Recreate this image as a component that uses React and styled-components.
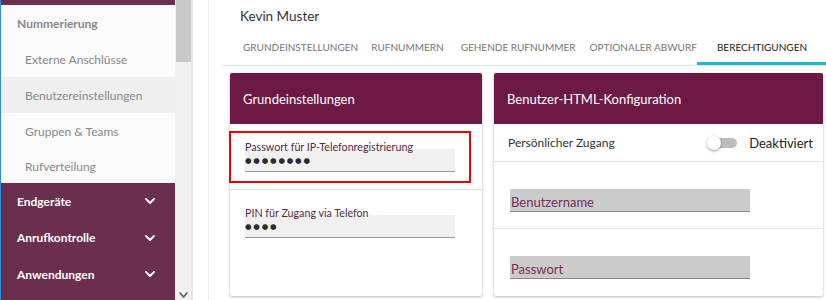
import React from 'react';
import styled, { createGlobalStyle } from 'styled-components';

const GlobalStyle = createGlobalStyle`
  html, body {
    margin: 0;
    padding: 0;
    background: #ffffff;
  }
  body {
    font-family: Lato, "Open Sans", sans-serif;
  }
  #root {
    height: 300px;
    overflow: hidden;
  }
`;

const Page = styled.div`
  display: flex;
  height: 300px;
  overflow: hidden;
  border-left: 1px solid #2a8ee8;
`;

const Sidebar = styled.nav`
  width: 174px;
  flex-shrink: 0;
  background: #fafafa;
  display: flex;
  flex-direction: column;
`;

const GroupEnd = styled.div`
  height: 5px;
  background: #6a2e4e;
`;

const SectionTitle = styled.div`
  height: 36px;
  display: flex;
  align-items: center;
  padding-left: 16px;
  font-size: 12px;
  font-weight: 700;
  color: #8a8a8a;
`;

const SubItem = styled.div`
  height: 36px;
  display: flex;
  align-items: center;
  padding-left: 24px;
  font-size: 12px;
  color: #888888;
  background: ${props => (props.$active ? '#efefef' : 'transparent')};

  &:last-of-type {
    height: 34px;
  }
`;

const SubList = styled.div`
  display: flex;
  flex-direction: column;
`;

const Group = styled.div`
  height: 36.5px;
  flex-shrink: 0;
  display: flex;
  align-items: center;
  justify-content: space-between;
  padding: 0 20px 0 16px;
  background: #6a2e4e;
  color: #ffffff;
  font-size: 12px;
  font-weight: 700;
`;

const GroupFill = styled.div`
  flex: 1;
  background: #6a2e4e;
`;

const Scrollbar = styled.div`
  width: 16px;
  flex-shrink: 0;
  background: #f0f0f0;
  display: flex;
  flex-direction: column;
  justify-content: space-between;
  align-items: flex-end;
`;

const Thumb = styled.div`
  width: 15px;
  height: 62px;
  background: #c8c8c8;
`;

const ScrollArrow = styled.div`
  width: 16px;
  height: 8px;
  display: flex;
  justify-content: center;
  align-items: flex-start;
`;

const Gutter = styled.div`
  width: 15px;
  flex-shrink: 0;
  border-left: 2px solid #e6e6e6;
  border-right: 1px solid #ececec;
  background: #ffffff;
`;

const Main = styled.main`
  flex: 1;
  min-width: 0;
  padding-left: 14px;
  display: flex;
  flex-direction: column;
  overflow: hidden;
`;

const UserName = styled.div`
  height: 31px;
  display: flex;
  align-items: center;
  padding-left: 17px;
  font-size: 13.5px;
  color: #333333;
`;

const Tabs = styled.div`
  display: flex;
  height: 34px;
  flex-shrink: 0;
  border-bottom: 1px solid #e3e3e3;
`;

const Tab = styled.div`
  display: flex;
  align-items: center;
  flex-shrink: 0;
  box-sizing: border-box;
  padding: 0 ${props => (props.$active ? 19 : 0)}px 0 ${props => props.$pad}px;
  font-size: 10px;
  white-space: nowrap;
  color: ${props => (props.$active ? '#222222' : '#777777')};
  border-bottom: 3px solid ${props => (props.$active ? '#1bb7d9' : 'transparent')};
`;

const Cards = styled.div`
  display: grid;
  grid-template-columns: 252px 329px;
  gap: 12px;
  padding: 7px 0 0 7px;
`;

const Card = styled.section`
  height: 223px;
  background: #ffffff;
  border-radius: 2px;
  box-shadow: 0 1px 3px rgba(0, 0, 0, 0.25), 0 0 1px rgba(0, 0, 0, 0.12);
  display: flex;
  flex-direction: column;
`;

const CardHeader = styled.header`
  height: 51px;
  flex-shrink: 0;
  display: flex;
  align-items: center;
  padding-left: 13px;
  background: #6c1a45;
  color: #ffffff;
  font-size: 13px;
  border-radius: 2px 2px 0 0;
`;

const FieldSection = styled.div`
  padding: 7px 0 6px;
  border-bottom: 1px solid #e4e4e4;

  &:last-child {
    border-bottom: none;
  }
`;

const Field = styled.div`
  margin-left: -1px;
  width: 242px;
  box-sizing: border-box;
  border: 2px solid ${props => (props.$marked ? '#ee0000' : 'transparent')};
  padding: 8px 14px 9px;
`;

const FieldLabel = styled.div`
  position: relative;
  z-index: 1;
  font-size: 10.7px;
  line-height: 12px;
  color: #55294a;
`;

const SecretBox = styled.div`
  margin-top: -4px;
  width: 210px;
  height: 23px;
  box-sizing: border-box;
  padding-top: 1px;
  display: flex;
  align-items: center;
  background: #f0f0f0;
  border-bottom: 1px solid #9a9a9a;
  font-family: "DejaVu Sans", sans-serif;
  font-size: 7.5px;
  letter-spacing: 1.8px;
  color: #2b2b2b;
`;

const ToggleRow = styled.div`
  height: 37px;
  flex-shrink: 0;
  display: flex;
  align-items: center;
  justify-content: space-between;
  padding: 0 10px 0 14px;
  border-bottom: 1px solid #e4e4e4;
  font-size: 12px;
  color: #333333;
`;

const ToggleState = styled.div`
  display: flex;
  align-items: center;
  gap: 12px;
  font-size: 13px;
  color: #222222;
`;

const Switch = styled.div`
  position: relative;
  width: 30px;
  height: 14px;
`;

const SwitchTrack = styled.div`
  position: absolute;
  left: 6px;
  right: 0;
  top: 2px;
  height: 10px;
  border-radius: 5px;
  background: #bdbdbd;
`;

const SwitchKnob = styled.div`
  position: absolute;
  left: 0;
  top: 0;
  width: 14px;
  height: 14px;
  border-radius: 50%;
  background: #ffffff;
  box-shadow: 0 1px 3px rgba(0, 0, 0, 0.4);
`;

const InputSection = styled.div`
  padding: 27px 0 16px 16px;
  border-bottom: 1px solid #e4e4e4;

  &:last-child {
    border-bottom: none;
  }
`;

const TextInput = styled.input`
  display: block;
  width: 240px;
  height: 23px;
  box-sizing: border-box;
  margin: 0;
  padding: 4px 0 0 1px;
  border: none;
  border-bottom: 1px solid #888888;
  background: #cbcbcb;
  font-family: Lato, sans-serif;
  font-size: 13px;
  color: #7a2e5a;
  outline: none;

  &::placeholder {
    color: #7a2e5a;
    opacity: 1;
  }
`;

const Chevron = ({ color = '#ffffff', w = 10, h = 6, sw = 1.8 }) => (
  <svg width={w} height={h} viewBox={`0 0 ${w} ${h}`} fill="none">
    <polyline
      points={`1,1 ${w / 2},${h - 1} ${w - 1},1`}
      stroke={color}
      strokeWidth={sw}
      strokeLinecap="round"
      strokeLinejoin="round"
    />
  </svg>
);

const subItems = ['Externe Anschlüsse', 'Benutzereinstellungen', 'Gruppen & Teams', 'Rufverteilung'];
const groups = ['Endgeräte', 'Anrufkontrolle', 'Anwendungen'];
const tabs = [
  { label: 'GRUNDEINSTELLUNGEN', pad: 20 },
  { label: 'RUFNUMMERN', pad: 13 },
  { label: 'GEHENDE RUFNUMMER', pad: 17 },
  { label: 'OPTIONALER ABWURF', pad: 14 },
  { label: 'BERECHTIGUNGEN', pad: 20, active: true },
];

export default function App() {
  return (
    <>
      <GlobalStyle />
      <Page>
        <Sidebar>
          <GroupEnd />
          <SectionTitle>Nummerierung</SectionTitle>
          <SubList>
            {subItems.map(item => (
              <SubItem key={item} $active={item === 'Benutzereinstellungen'}>
                {item}
              </SubItem>
            ))}
          </SubList>
          {groups.map(g => (
            <Group key={g}>
              {g}
              <Chevron />
            </Group>
          ))}
          <GroupFill />
        </Sidebar>
        <Scrollbar>
          <Thumb />
          <ScrollArrow>
            <Chevron color="#5a5a5a" w={9} h={6} sw={1.6} />
          </ScrollArrow>
        </Scrollbar>
        <Gutter />
        <Main>
          <UserName>Kevin Muster</UserName>
          <Tabs>
            {tabs.map(t => (
              <Tab key={t.label} $pad={t.pad} $active={t.active}>
                {t.label}
              </Tab>
            ))}
          </Tabs>
          <Cards>
            <Card>
              <CardHeader>Grundeinstellungen</CardHeader>
              <FieldSection>
                <Field $marked>
                  <FieldLabel>Passwort für IP-Telefonregistrierung</FieldLabel>
                  <SecretBox>●●●●●●●●</SecretBox>
                </Field>
              </FieldSection>
              <FieldSection>
                <Field>
                  <FieldLabel>PIN für Zugang via Telefon</FieldLabel>
                  <SecretBox>●●●●</SecretBox>
                </Field>
              </FieldSection>
            </Card>
            <Card>
              <CardHeader>Benutzer-HTML-Konfiguration</CardHeader>
              <ToggleRow>
                Persönlicher Zugang
                <ToggleState>
                  <Switch>
                    <SwitchTrack />
                    <SwitchKnob />
                  </Switch>
                  Deaktiviert
                </ToggleState>
              </ToggleRow>
              <InputSection>
                <TextInput readOnly placeholder="Benutzername" />
              </InputSection>
              <InputSection>
                <TextInput readOnly placeholder="Passwort" />
              </InputSection>
            </Card>
          </Cards>
        </Main>
      </Page>
    </>
  );
}
